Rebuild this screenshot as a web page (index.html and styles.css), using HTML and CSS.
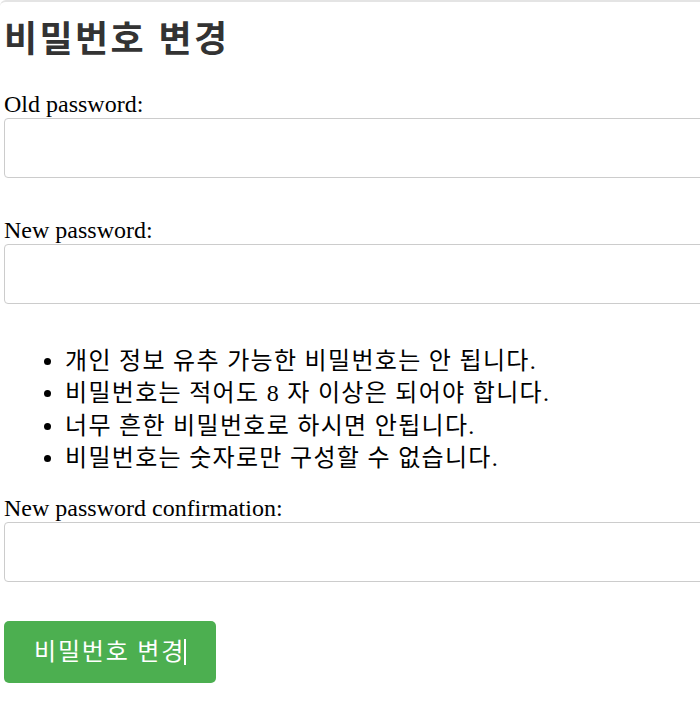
FILE: index.html
```html
<!DOCTYPE html>
<html lang="ko">
<head>
<meta charset="utf-8">
<title>비밀번호 변경</title>
<link rel="stylesheet" href="styles.css">
</head>
<body>
<div class="page">
  <h1 class="title">비밀번호 변경</h1>
  <form class="form">
    <label class="field-label" for="old">Old password:</label>
    <input class="field-input" type="password" id="old">

    <label class="field-label" for="new1">New password:</label>
    <input class="field-input" type="password" id="new1">

    <ul class="help">
      <li>개인 정보 유추 가능한 비밀번호는 안 됩니다.</li>
      <li>비밀번호는 적어도 8 자 이상은 되어야 합니다.</li>
      <li>너무 흔한 비밀번호로 하시면 안됩니다.</li>
      <li>비밀번호는 숫자로만 구성할 수 없습니다.</li>
    </ul>

    <label class="field-label" for="new2">New password confirmation:</label>
    <input class="field-input" type="password" id="new2">

    <button class="submit" type="button"><span class="submit-text">비밀번호 변경</span></button>
  </form>
</div>
</body>
</html>
```

FILE: styles.css
```css
html, body {
  margin: 0;
  padding: 0;
  background: #fff;
}
body {
  font-family: "Liberation Serif", "Noto Sans CJK KR", serif;
  color: #000;
  overflow: hidden;
}
.page {
  border-top: 2px solid #e4e4e4;
  border-top-left-radius: 6px;
  padding: 0 4px;
}
.title {
  margin: 11px 0 0;
  font-family: "Noto Sans CJK KR", sans-serif;
  font-size: 36px;
  line-height: 46px;
  letter-spacing: 2.4px;
  font-weight: 700;
  color: #333;
}
.form {
  display: flex;
  flex-direction: column;
  align-items: flex-start;
  margin-top: 32px;
}
.field-label {
  display: block;
  font-size: 24px;
  line-height: 27px;
}
.field-input {
  box-sizing: border-box;
  width: 760px;
  height: 60px;
  margin: 0 0 39px;
  padding: 12px 20px;
  border: 1px solid #ccc;
  border-radius: 4px;
  font-size: 20px;
  background: #fff;
}
.help {
  margin: 2px 0 21px;
  padding-left: 61px;
  font-size: 24px;
  line-height: 32.3px;
  letter-spacing: 1.3px;
}
.submit {
  margin-top: 0;
  height: 62px;
  padding: 0 30px;
  border: none;
  border-radius: 5px;
  background: #4caf50;
  color: #fff;
  font-family: "Liberation Serif", "Noto Sans CJK KR", serif;
  font-size: 24px;
  line-height: 32px;
  letter-spacing: 1.8px;
}
.submit-text::after {
  content: "";
  display: inline-block;
  width: 2px;
  height: 26px;
  margin-left: -1px;
  vertical-align: -5px;
  background: #fff;
}
```
